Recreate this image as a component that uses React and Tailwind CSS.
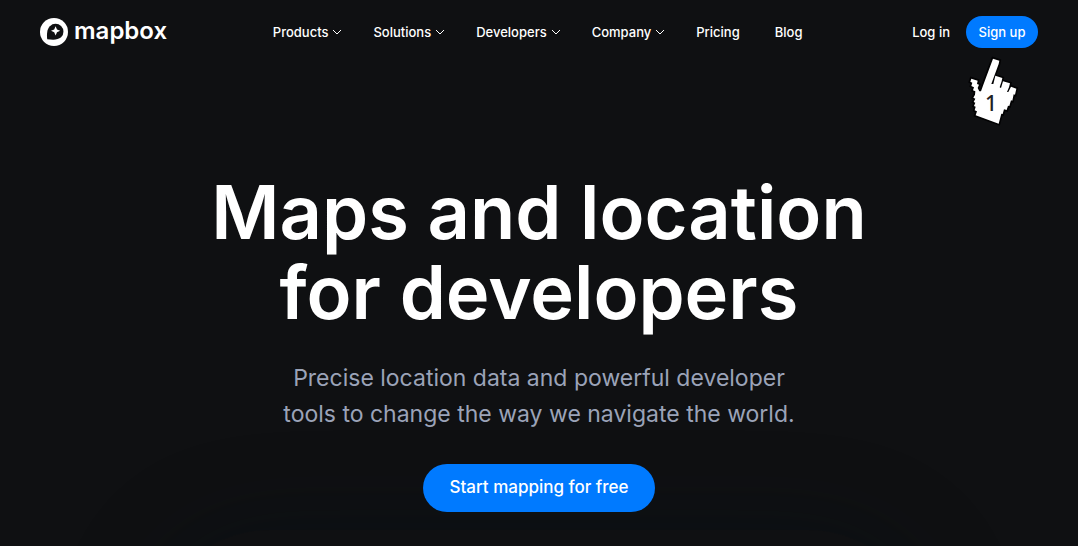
const menus = ["Products", "Solutions", "Developers", "Company"];

const links = ["Pricing", "Blog"];

function Chevron() {
  return (
    <svg viewBox="0 0 10 6" className="h-1.5 w-2.5" fill="none" stroke="currentColor" strokeWidth="1" aria-hidden="true">
      <path d="M1 1l4 4 4-4" />
    </svg>
  );
}

function Logo() {
  return (
    <a href="#" className="flex items-center gap-1.5">
      <svg viewBox="0 0 28 28" className="size-7" aria-hidden="true">
        <circle cx="14" cy="14" r="14" fill="#fff" />
        <path d="M7.200 21.200C6.600 16 7 11.300 9.900 8.200a8 8 0 0 1 11.200-.1 7.900 7.900 0 0 1 0 11.200C17.900 22.200 12.500 21.800 7.200 21.200Z" fill="#0f1012" />
        <path d="M15.600 8.200l1.400 3.200 3.200 1.400-3.200 1.400-1.400 3.200-1.400-3.200-3.200-1.400 3.200-1.400Z" fill="#fff" />
      </svg>
      <span className="-mt-0.5 text-2xl leading-6 font-semibold">mapbox</span>
    </a>
  );
}

function Pointer() {
  return (
    <svg viewBox="0 0 75 80" className="h-20 w-[75px]" role="img" aria-label="Step 1">
      <g transform="translate(10 2) scale(0.3333)">
        <path
          d="M84 20L103 26 101 36 79 96 85 96 91 71 112 78 110 88 104 106 108 108 114 88 135 94 132 106 126 120 130 120 138 104 154 110 150 128 146 127 142 146 138 145 133 162 129 161 125 174 117 172 113 186 109 185 101 215 32 190 36 178 29 175 32 164 27 162 31 152 26 150 31 140 25 137 30 128 31 118 24 115 27 106 19 102 22 92 16 89 19 80 38 86 36 96 42 98 38 108 43 118 48 118 55 98Z"
          fill="#fff"
          stroke="#020203"
          strokeWidth="10"
          strokeLinejoin="miter"
          paintOrder="stroke"
        />
      </g>
      <text x="36" y="61" textAnchor="middle" fontSize="21" fontWeight="500" fill="#1f2024" className="font-['Noto_Sans',sans-serif]">1</text>
    </svg>
  );
}

export default function App() {
  return (
    <div className="relative min-h-screen overflow-hidden bg-[#0f1012] font-['Inter',sans-serif] text-white">
      <div
        aria-hidden="true"
        className="absolute inset-x-[150px] top-[530px] h-80 rounded-[120px] shadow-[0_0_90px_rgba(0,16,26,0.35)]"
      />
      <header className="relative flex h-16 items-center justify-between px-10 text-[13px] leading-5 font-medium">
        <Logo />
        <nav className="flex items-center gap-[31px] pr-1">
          {menus.map((label) => (
            <button key={label} type="button" className="flex items-center gap-1">
              {label}
              <Chevron />
            </button>
          ))}
          <div className="flex items-center gap-[35px]">
            {links.map((label) => (
              <a key={label} href="#">{label}</a>
            ))}
          </div>
        </nav>
        <div className="flex items-center gap-4">
          <a href="#">Log in</a>
          <div className="relative">
            <a href="#" className="flex h-8 min-w-[72px] items-center justify-center rounded-full bg-[#007aff] px-3">Sign up</a>
            <div className="pointer-events-none absolute top-[34px] right-2">
              <Pointer />
            </div>
          </div>
        </div>
      </header>
      <main className="relative flex flex-col items-center px-10 pt-[108px] pb-8 text-center">
        <h1 className="text-[74px] leading-[80px] font-semibold">
          Maps and location
          <br />
          for developers
        </h1>
        <p className="mt-7 text-[23px] leading-9 font-normal text-[#9ba3b8]">
          Precise location data and powerful developer
          <br />
          tools to change the way we navigate the world.
        </p>
        <a href="#" className="mt-8 flex h-12 items-center rounded-full bg-[#007aff] px-[26px] text-[17px] font-medium">
          Start mapping for free
        </a>
      </main>
    </div>
  );
}
